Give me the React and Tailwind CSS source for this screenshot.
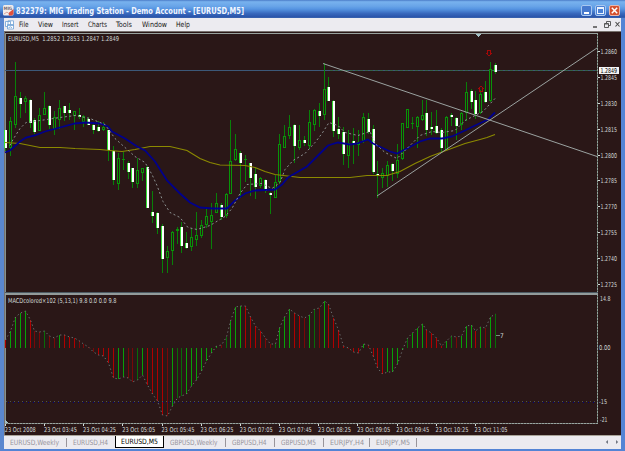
import React from "react";

// Candles: [high, low, bodyTop, bodyBottom, filled]
const CANDLES = [
  [130,150,130,147,1],[117,155,121,147,0],[62,127,96,124,0],[92,117,98,103,1],[96,112,98,101,0],
  [99,127,100,122,1],[118,133,120,131,1],[108,130,115,130,0],[92,114,108,114,0],[105,128,106,124,1],
  [111,134,117,128,0],[100,128,108,119,0],[106,120,106,112,1],[103,119,110,112,1],[111,129,111,115,0],
  [108,118,115,116,1],[115,126,116,121,0],[117,124,119,124,1],[123,133,125,129,1],[121,131,127,130,1],
  [122,130,127,129,0],[130,160,130,149,1],[146,184,151,179,1],[153,189,158,183,0],[152,169,159,159,0],
  [161,178,163,171,1],[168,187,168,181,1],[158,187,170,183,0],[168,180,168,172,0],[166,207,167,207,1],
  [191,222,212,215,1],[212,233,213,227,1],[224,272,226,258,1],[246,272,251,257,0],[231,264,232,250,0],
  [227,243,229,230,0],[222,252,227,245,1],[232,248,243,247,1],[228,250,237,246,0],[212,245,235,239,0],
  [220,237,225,235,0],[208,227,216,224,0],[203,248,215,221,0],[193,212,203,212,0],[203,219,205,216,1],
  [193,217,194,215,0],[120,193,161,193,0],[134,160,149,159,0],[151,197,153,162,1],[155,181,159,159,0],
  [163,195,163,177,1],[168,198,174,186,1],[177,187,178,185,0],[179,192,180,190,1],[192,213,193,194,1],
  [175,197,182,197,0],[134,183,144,181,0],[125,147,136,147,0],[115,138,127,135,0],[124,162,125,145,1],
  [125,149,140,147,0],[136,145,140,142,1],[110,148,122,145,0],[109,130,110,124,0],[103,126,111,115,1],
  [63,119,89,114,0],[77,100,87,100,1],[100,136,101,130,1],[117,138,129,133,1],[127,164,132,153,1],
  [130,167,143,155,0],[128,163,141,142,1],[130,155,142,144,0],[113,142,117,140,0],[113,133,119,131,1],
  [125,173,129,171,1],[161,197,174,175,1],[168,187,173,177,0],[161,186,165,175,0],[163,180,164,170,1],
  [144,177,160,173,0],[123,159,123,158,0],[109,127,109,127,0],[117,128,123,123,0],[116,147,117,126,0],
  [100,120,115,119,0],[100,135,113,129,1],[112,134,127,128,1],[110,133,126,132,1],[128,151,130,147,1],
  [116,149,117,149,0],[113,125,115,116,1],[117,139,118,125,1],[112,129,113,124,0],[82,120,92,112,0],
  [89,108,91,101,1],[91,118,100,113,1],[90,113,94,112,0],[81,102,92,101,1],[62,101,69,100,0],[63,73,65,71,1],
];

// MACD tips: [y, colour key]; r/g bright, d dark red, e dark green
const MACD = [
  [340,"r"],[331,"g"],[317,"g"],[313,"g"],[311,"g"],[320,"r"],[331,"d"],[332,"d"],[331,"e"],[336,"d"],
  [338,"d"],[335,"g"],[335,"r"],[337,"r"],[338,"r"],[341,"d"],[344,"d"],[347,"d"],[352,"d"],[355,"r"],
  [356,"r"],[363,"r"],[378,"r"],[379,"g"],[377,"g"],[378,"d"],[382,"d"],[380,"e"],[375,"g"],[385,"r"],
  [394,"r"],[401,"r"],[415,"r"],[416,"d"],[406,"g"],[398,"e"],[396,"e"],[394,"g"],[386,"g"],[380,"g"],
  [371,"g"],[361,"g"],[353,"g"],[346,"g"],[345,"d"],[337,"e"],[321,"g"],[307,"g"],[306,"g"],[306,"r"],
  [317,"r"],[326,"r"],[331,"r"],[338,"d"],[344,"d"],[344,"e"],[328,"g"],[317,"g"],[309,"g"],[313,"r"],
  [316,"r"],[318,"d"],[315,"g"],[309,"e"],[308,"d"],[301,"g"],[304,"r"],[318,"r"],[330,"r"],[346,"r"],
  [348,"d"],[352,"r"],[353,"r"],[344,"g"],[345,"d"],[357,"r"],[368,"r"],[374,"r"],[372,"g"],[372,"g"],
  [364,"g"],[350,"g"],[338,"e"],[333,"g"],[328,"g"],[324,"g"],[330,"r"],[333,"r"],[338,"r"],[346,"r"],
  [341,"g"],[336,"e"],[337,"d"],[336,"g"],[326,"g"],[325,"g"],[331,"r"],[327,"g"],[328,"d"],[317,"g"],[314,"e"],
];
const MACD_FILL = { r: "#b00000", g: "#08a008", d: "#780808", e: "#086c08" };

const BLUE_MA = "5,152 10,150 20,141 26,137 35,135 45,131 60,127 75,123 85,122 100,123 108,126 112,131 125,138 137,146 145,150 155,161 167,180 180,193 190,202 200,207 213,208 222,208 227,208 235,200 245,193 255,190 275,189 282,184 288,177 307,166 320,153 328,145 338,142 350,144 357,143 368,139 373,143 390,151 397,153 407,148 420,141 430,138 442,138 452,136 465,130 473,126 488,119 495,112";
const YELLOW_MA = "5,142 20,143 40,147 60,147 75,148 100,149 110,150 122,151 135,149 150,146 170,146 187,150 200,158 210,162 220,164.5 245,165 255,167 265,171 275,174 300,177 350,177 367,175 387,175 400,171 415,163 430,156 446,150 465,143 480,139 487,137 495,134";
const FAST_MA = "10,145 13,139 20,128 26,122 40,120 60,117 75,115 90,118 105,124 115,138 125,147 135,156 145,162 152,174 157,185 163,201 170,212 180,217 188,227 197,229 210,225 225,216 232,208 240,193 247,184 262,183 272,188 280,182 285,169 293,160 305,153 315,142 322,133 329,122 338,125 345,132 358,135 370,131 375,143 385,152 397,158 410,145 420,135 432,131 442,132 455,130 465,120 475,115 483,111 495,98";

const PRICES = [
  ["1.2860", 51],["1.2845", 77],["1.2830", 103],["1.2815", 129],["1.2800", 155],
  ["1.2785", 180],["1.2770", 206],["1.2755", 232],["1.2740", 258],["1.2725", 284],
];
const TIMES = [
  "23 Oct 2008","23 Oct 03:45","23 Oct 04:25","23 Oct 05:05","23 Oct 05:45","23 Oct 06:25","23 Oct 07:05",
  "23 Oct 07:45","23 Oct 08:25","23 Oct 09:05","23 Oct 09:45","23 Oct 10:25","23 Oct 11:05",
];

const candleX = (i) => Math.round(5 + 4.9 * i);

function Candle({ i, c }) {
  const [hi, lo, top, bottom, filled] = c;
  const x = candleX(i);
  const h = bottom - top;
  return (
    <g>
      <rect x={x} y={hi} width="1" height={lo - hi + 1} fill="#088008" />
      {h === 0 ? (
        <rect x={x - 1} y={top} width="3" height="1" fill="#089008" />
      ) : filled ? (
        <>
          <rect x={x - 1} y={top} width="3" height={h + 1} fill="#30e030" />
          <rect x={x} y={top} width="2" height={h + 1} fill="#ffffff" />
        </>
      ) : (
        <rect x={x - 0.5} y={top + 0.5} width="2" height={h} fill="#2a1717" stroke="#089408" />
      )}
    </g>
  );
}

function Chart() {
  return (
    <svg className="block h-[404px] w-[617px] shrink-0" viewBox="4 31 617 404" shapeRendering="crispEdges" fontFamily="'DejaVu Sans Condensed','DejaVu Sans',sans-serif" fontSize="6.6">
      <rect x="4" y="31" width="617" height="404" fill="#2a1717" />
      <rect x="4" y="31" width="617" height="1" fill="#77716d" />
      <rect x="4" y="31" width="1" height="404" fill="#77716d" />

      <rect x="5" y="33" width="593" height="1" fill="#98a29e" />
      <rect x="5" y="33" width="1" height="390" fill="#87918d" />
      <path d="M597.5 33V423" stroke="#92a39b" strokeDasharray="2 1" />
      <path d="M597.5 33V423" stroke="#55645c" strokeDasharray="1 2" strokeDashoffset="1" />
      <rect x="5" y="292" width="593" height="1" fill="#4b5962" />
      <rect x="5" y="293" width="593" height="2" fill="#929b9b" />
      <path d="M5 423.5H598" stroke="#9aa4a0" strokeDasharray="2 1" />
      <path d="M5 423.5H598" stroke="#66706b" strokeDasharray="1 2" strokeDashoffset="1" />
      <path d="M5 419l3 4H5zM475 34h6l-3 3z" fill="#a6c2c8" />

      <path d="M5 70.5H597" stroke="#3c5878" />
      <path d="M330 70.5H597" stroke="#356348" strokeDasharray="3 2" />

      {CANDLES.map((c, i) => <Candle key={i} i={i} c={c} />)}

      <g fill="none" shapeRendering="auto">
        <polyline points={YELLOW_MA} stroke="#8c8a00" strokeWidth="1.1" transform="translate(0 .5)" />
        <polyline points={BLUE_MA} stroke="#00008c" strokeWidth="1.8" transform="translate(0 .5)" />
        <polyline points={FAST_MA} stroke="#8c9292" strokeWidth="1" strokeDasharray="2 2.5" transform="translate(0 .5)" />
        <path d="M323 63.5L597 156.5M377 196L597 48" stroke="#9aa2a0" strokeWidth="1" />
      </g>

      <g fill="none" stroke="#a40808">
        <path d="M487.5 50v3M490.500 50v3M487 50.500h4M486 53.500h2M490 53.500h2M487 54.500h1M490 54.500h1M488 55.500h2" />
        <path d="M479.5 89v3M482.500 89v3M479 91.500h4M478 88.500h2M482 88.500h2M479 87.500h1M482 87.500h1M480 86.500h2" />
      </g>

      {MACD.map(([y, k], i) => (
        <rect key={i} x={candleX(i)} y={Math.min(y, 348)} width="1" height={Math.max(Math.abs(348 - y), 0.5)} fill={MACD_FILL[k]} />
      ))}
      <polyline
        points={MACD.map(([y], i) => `${candleX(i) + 0.5},${y}`).join(" ")}
        fill="none" stroke="#747a7a" strokeWidth=".9" strokeDasharray="1.300 2.700" shapeRendering="auto"
      />
      <path d="M6 401.500H597" stroke="#4e5550" strokeDasharray="1 3" />
      <path d="M8 402.500H597" stroke="#00007c" strokeDasharray="1 4" />
      <path d="M496 335.500h4" stroke="#7b8a82" />

      <g fill="#d3dad7" shapeRendering="auto">
        <text x="8" y="40.800" textLength="111" lengthAdjust="spacingAndGlyphs" xmlSpace="preserve">EURUSD,M5&#160; 1.2852 1.2853 1.2847 1.2849</text>
        <text x="8" y="303" textLength="108.500" lengthAdjust="spacingAndGlyphs">MACDcolored×102 (5,13,1) 9.8 0.0 0.0 9.8</text>
        <text x="500" y="337.500">7</text>
        {PRICES.map(([p, y]) => (
          <g key={p}>
            <rect x="598" y={y} width="2" height="1" />
            <text x="600.500" y={y + 2.500} textLength="16.500" lengthAdjust="spacingAndGlyphs">{p}</text>
          </g>
        ))}
        <text x="600" y="300.800" textLength="10.500" lengthAdjust="spacingAndGlyphs">14.8</text>
        <text x="599" y="350.200" textLength="11.500" lengthAdjust="spacingAndGlyphs">0.00</text>
        <text x="599" y="403.800" textLength="8" lengthAdjust="spacingAndGlyphs">-15</text>
        <text x="600" y="422.300" textLength="7.500" lengthAdjust="spacingAndGlyphs">-21</text>
        {TIMES.map((t, i) => (
          <g key={t}>
            <rect x={Math.round(5 + 39.15 * i)} y="424" width="1" height="2" />
            <text x={4.8 + 39.15 * i} y="431.800" textLength={i ? 33 : 31} lengthAdjust="spacingAndGlyphs">{t}</text>
          </g>
        ))}
      </g>
      <rect x="599" y="67" width="20" height="7" fill="#f4f4f4" />
      <text x="600.500" y="72.900" fill="#000" textLength="16.500" lengthAdjust="spacingAndGlyphs" shapeRendering="auto">1.2849</text>
    </svg>
  );
}

function Label({ w, children, className = "" }) {
  return (
    <svg className={`block h-[11px] shrink-0 overflow-visible ${className}`} width={w} height="11">
      <text x="0" y="8" fill="currentColor" textLength={w} lengthAdjust="spacingAndGlyphs">{children}</text>
    </svg>
  );
}

function TitleBar() {
  return (
    <header className="flex h-[18px] shrink-0 items-center bg-[linear-gradient(180deg,#4b7cc8_0%,#78b2ee_10%,#68a4e8_35%,#5695e2_50%,#3868bd_75%,#2b56ac_92%,#3b64ae_100%)] pr-[5px] pl-[3px]">
      <svg className="mt-[3px] h-[11px] w-[11px] shrink-0" viewBox="0 0 11 11">
        <rect width="10.500" height="10.500" rx="1.500" fill="#f2eceb" />
        <path d="M5.500 8L10.500 4V9L9 10.500H6z" fill="#e2503c" />
        <path d="M1 9l3-2 2 2" stroke="#d9a7a0" fill="none" />
        <text x=".6" y="4.500" fontSize="4.500" fontWeight="700" fill="#746a72" textLength="8.500">MIG</text>
      </svg>
      <Label w={228} className="mt-[4px] ml-[2px] font-['DejaVu_Sans_Condensed','DejaVu_Sans',sans-serif] text-[8.4px] font-bold text-[#f1f6ff]">
        832379: MIG Trading Station - Demo Account - [EURUSD,M5]
      </Label>
      <div className="mt-[2px] ml-auto flex gap-[3px]">
        <span className="flex h-[11px] w-[11px] items-end rounded-[2px] border border-[#a9c8f0] bg-[#4679ce] pb-[1px] pl-[2px]">
          <i className="h-[2px] w-[5px] bg-white" />
        </span>
        <span className="flex h-[11px] w-[11px] items-center justify-center rounded-[2px] border border-[#a9c8f0] bg-[#4a80d4]">
          <i className="h-[7px] w-[7px] border border-t-2 border-[#e9f2ff]" />
        </span>
        <span className="flex h-[11px] w-[11px] items-center justify-center rounded-[2px] border border-[#e8b7ac] bg-[#d4502f]">
          <svg className="h-[7px] w-[7px]" viewBox="0 0 7 7"><path d="M.8.8l5.400 5.400M6.200.8L.8 6.200" stroke="#fff" strokeWidth="1.500" /></svg>
        </span>
      </div>
    </header>
  );
}

function MenuBar() {
  const items = [["File", 9.5, 9.5], ["View", 15, 8.5], ["Insert", 16.5, 9.5], ["Charts", 19, 9.5], ["Tools", 16, 9.5], ["Window", 25, 9], ["Help", 14, 0]];
  return (
    <nav className="flex h-[13px] shrink-0 items-center bg-[#ecebf0] text-[7.4px] text-[#151515]">
      <svg className="mr-[5px] ml-[1px] h-[10px] w-[9px] shrink-0" viewBox="0 0 9 10" fill="#fff" stroke="#6b9fd4" strokeWidth=".8">
        <path d="M.5 1.500h5v5h-5zM3 .8h5.500v4.500H3z" /><path d="M2.500 4.500h6V9h-6zM2.500 5.500h6M3.500 7.800l2-1 1.500 1" />
      </svg>
      {items.map(([t, w, gap]) => (
        <span key={t} style={{ paddingRight: gap }}><Label w={w}>{t}</Label></span>
      ))}
      <svg className="mr-[1px] ml-auto h-[9px] w-[30px]" viewBox="0 0 30 9" fill="none" stroke="#4c4c4c">
        <path d="M3 7h4" strokeWidth="1.500" />
        <path d="M14.500 3.500h4v4h-4zM16.500 3V1.500h4v4h-2M14.500 4h4" strokeWidth=".9" />
        <path d="M25.500 2l4 4.500M29.500 2l-4 4.500" strokeWidth="1.100" />
      </svg>
    </nav>
  );
}

function Tabs() {
  const rest = [["GBPUSD,Weekly", 62, 47.5], ["GBPUSD,H4", 49, 34.5], ["GBPUSD,M5", 49, 35], ["EURJPY,H4", 46, 34], ["EURJPY,M5", 47, 34]];
  return (
    <footer className="flex h-[14px] shrink-0 border-t border-[#aaa59a] bg-[#ecebf0] text-[7.2px] text-[#97949b]">
      <div className="flex w-[62px] items-center pl-[6px]"><Label w={49}>EURUSD,Weekly</Label></div>
      <div className="my-[2px] flex w-[49px] items-center border-l border-[#99959b] pl-[6px]"><Label w={35}>EURUSD,H4</Label></div>
      <div className="flex h-[12px] w-[49px] items-center border-x border-b border-black bg-white pl-[5px] text-black"><Label w={37}>EURUSD,M5</Label></div>
      {rest.map(([t, w, tw]) => (
        <div key={t} className="my-[2px] flex items-center border-r border-[#99959b] pl-[6px]" style={{ width: w }}><Label w={tw}>{t}</Label></div>
      ))}
      <svg className="mt-[2px] mr-[2px] ml-auto h-[8px] w-[14px]" viewBox="0 0 14 8" fill="#727782"><path d="M3 2v4L.8 4zM11 2v4l2.200-2z" /></svg>
    </footer>
  );
}

export default function App() {
  return (
    <div className="flex h-[451px] w-[625px] flex-col overflow-hidden bg-[#4e7fd2] font-['DejaVu_Sans_Condensed','DejaVu_Sans',sans-serif]">
      <TitleBar />
      <main className="flex min-h-0 flex-1 flex-col border-x-[4px] border-b-[3px] border-t-0 border-[#5484d5] border-l-[#5a87cf]">
        <MenuBar />
        <Chart />
        <Tabs />
      </main>
    </div>
  );
}
